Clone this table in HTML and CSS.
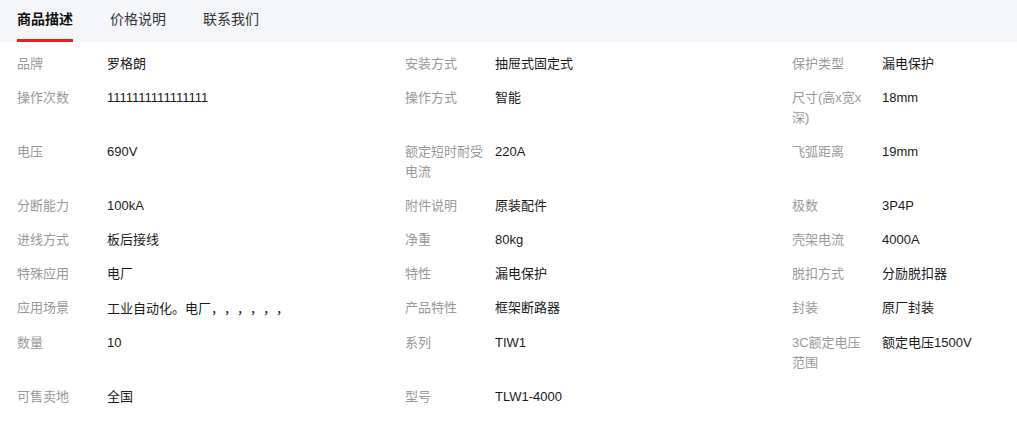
FILE: index.html
```html
<!DOCTYPE html>
<html lang="zh-CN">
<head>
<meta charset="utf-8">
<title>商品描述</title>
<link rel="stylesheet" href="styles.css">
</head>
<body>
<div class="tabs">
  <div class="tab active">商品描述</div>
  <div class="tab">价格说明</div>
  <div class="tab">联系我们</div>
</div>
<div class="attrs">
  <div class="attr"><span class="label">品牌</span><span class="value">罗格朗</span></div>
  <div class="attr"><span class="label">安装方式</span><span class="value">抽屉式固定式</span></div>
  <div class="attr"><span class="label">保护类型</span><span class="value">漏电保护</span></div>

  <div class="attr"><span class="label">操作次数</span><span class="value">1111111111111111</span></div>
  <div class="attr"><span class="label">操作方式</span><span class="value">智能</span></div>
  <div class="attr"><span class="label">尺寸(高x宽x深)</span><span class="value">18mm</span></div>

  <div class="attr"><span class="label">电压</span><span class="value">690V</span></div>
  <div class="attr"><span class="label">额定短时耐受电流</span><span class="value">220A</span></div>
  <div class="attr"><span class="label">飞弧距离</span><span class="value">19mm</span></div>

  <div class="attr"><span class="label">分断能力</span><span class="value">100kA</span></div>
  <div class="attr"><span class="label">附件说明</span><span class="value">原装配件</span></div>
  <div class="attr"><span class="label">极数</span><span class="value">3P4P</span></div>

  <div class="attr"><span class="label">进线方式</span><span class="value">板后接线</span></div>
  <div class="attr"><span class="label">净重</span><span class="value">80kg</span></div>
  <div class="attr"><span class="label">壳架电流</span><span class="value">4000A</span></div>

  <div class="attr"><span class="label">特殊应用</span><span class="value">电厂</span></div>
  <div class="attr"><span class="label">特性</span><span class="value">漏电保护</span></div>
  <div class="attr"><span class="label">脱扣方式</span><span class="value">分励脱扣器</span></div>

  <div class="attr"><span class="label">应用场景</span><span class="value">工业自动化。电厂<span class="cjk">，，，，，，</span></span></div>
  <div class="attr"><span class="label">产品特性</span><span class="value">框架断路器</span></div>
  <div class="attr"><span class="label">封装</span><span class="value">原厂封装</span></div>

  <div class="attr"><span class="label">数量</span><span class="value">10</span></div>
  <div class="attr"><span class="label">系列</span><span class="value">TIW1</span></div>
  <div class="attr"><span class="label">3C额定电压范围</span><span class="value">额定电压1500V</span></div>

  <div class="attr"><span class="label">可售卖地</span><span class="value">全国</span></div>
  <div class="attr"><span class="label">型号</span><span class="value">TLW1-4000</span></div>
</div>
</body>
</html>
```

FILE: styles.css
```css
html, body {
  margin: 0;
  padding: 0;
  background: #ffffff;
}

body {
  font-family: "Liberation Sans", "Noto Sans CJK SC", sans-serif;
  color: #222222;
  overflow: hidden;
  text-spacing-trim: space-all;
}

.tabs {
  display: flex;
  gap: 37px;
  height: 42px;
  padding-left: 17px;
  background: #f5f6fa;
  box-sizing: border-box;
}

.tab {
  font-size: 14px;
  line-height: 39px;
  color: #333333;
  border-bottom: 3px solid transparent;
}

.tab.active {
  font-weight: bold;
  color: #111111;
  border-bottom-color: #e2231a;
}

.attrs {
  display: grid;
  grid-template-columns: 388px 387px 1fr;
  row-gap: 14px;
  padding: 12px 0 0 17px;
  font-size: 13px;
  line-height: 20px;
}

.attr {
  display: flex;
  align-items: flex-start;
}

.label {
  flex: 0 0 79px;
  width: 79px;
  margin-right: 11px;
  color: #999999;
}

.value {
  flex: 1;
  min-width: 0;
  color: #1a1a1a;
}

.cjk {
  font-family: "Noto Sans CJK SC", sans-serif;
  text-spacing-trim: space-all;
}
```
